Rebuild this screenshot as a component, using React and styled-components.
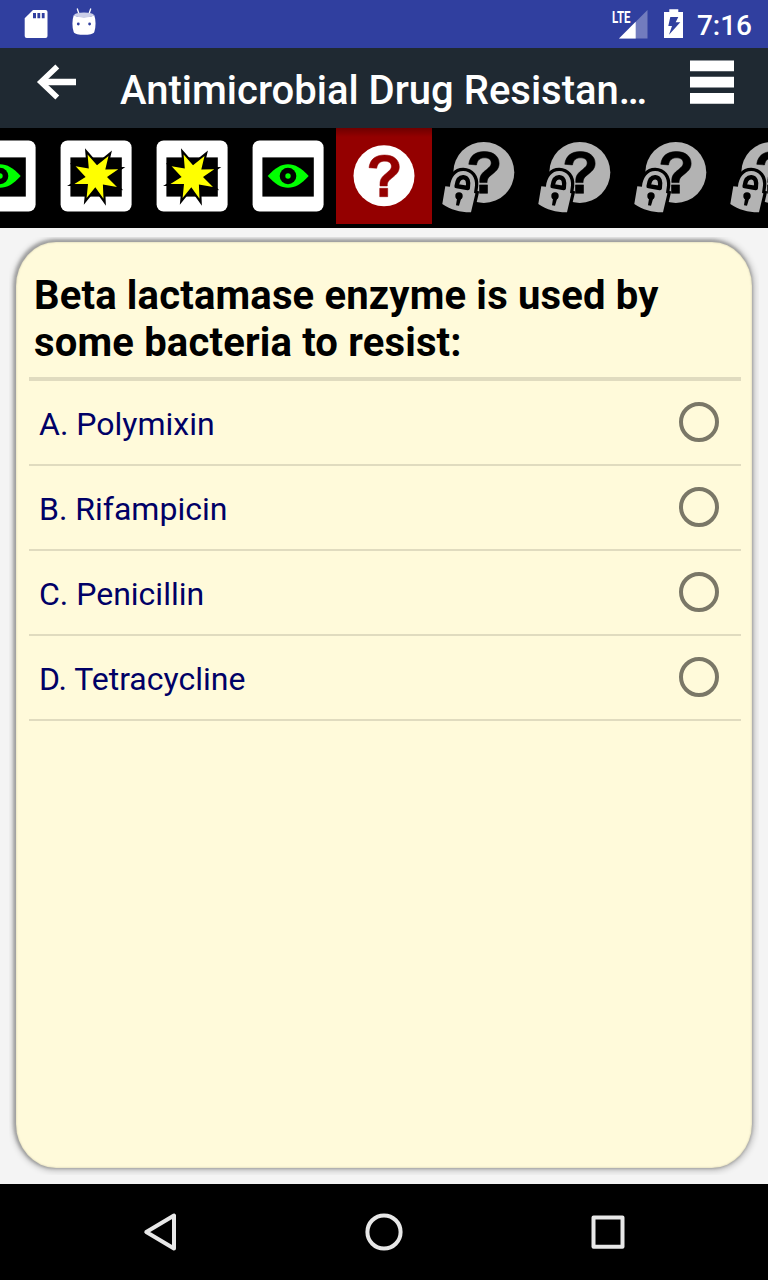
import React from "react";
import styled, { createGlobalStyle } from "styled-components";

const GlobalStyle = createGlobalStyle`
  *, *::before, *::after { box-sizing: border-box; }
  body { margin: 0; background: #f4f4f4; font-family: Roboto, sans-serif; }
`;

const Screen = styled.div`
  width: 768px;
  height: 1280px;
  display: flex;
  flex-direction: column;
  overflow: hidden;
`;

const StatusBar = styled.header`
  height: 48px;
  flex: none;
  display: flex;
  justify-content: space-between;
  background: #303f9f;
`;

const StatusGroup = styled.div`
  display: flex;
  padding-right: ${(p) => (p.$end ? "16px" : "0")};
`;

const Clock = styled.span`
  font-size: 28px;
  font-weight: 500;
  line-height: 52px;
  color: #fff;
`;

const AppBar = styled.div`
  height: 80px;
  flex: none;
  display: flex;
  background: #1f2932;
`;

const BarButton = styled.button`
  width: ${(p) => p.$width}px;
  height: 80px;
  flex: none;
  padding: 0;
  border: 0;
  background: none;
`;

const Title = styled.h1`
  margin: 0;
  flex: 1;
  min-width: 0;
  font-size: 40px;
  font-weight: 500;
  line-height: 47px;
  padding-top: 19px;
  white-space: nowrap;
  color: #fff;
`;

const Strip = styled.nav`
  height: 100px;
  flex: none;
  display: flex;
  overflow: hidden;
  background: #000;
`;

const StripCell = styled.div`
  width: 96px;
  height: 96px;
  flex: none;
  background: ${(p) =>
    p.$active ? "linear-gradient(#6e0000, #940000 9px)" : "transparent"};

  &:first-child { margin-left: -48px; }
  svg { display: block; }
`;

const Content = styled.main`
  flex: 1;
  display: flex;
  padding: 9px 9px 9px;
  background: #f4f4f4;
`;

const CardFrame = styled.div`
  flex: 1;
  display: flex;
  padding: 5px 7px 7px;
  overflow: hidden;
`;

const Card = styled.section`
  flex: 1;
  padding: 30px 11px 0 13px;
  background: #fffada;
  border-radius: 40px / 44px;
  box-shadow:
    inset 0 0 2px rgba(120, 118, 100, 0.45),
    -1px -1px 3px 2px rgba(0, 0, 0, 0.22),
    0 0 6px 3px rgba(0, 0, 0, 0.2);
`;

const Question = styled.h2`
  margin: 0;
  padding: 0 5px 11px;
  border-bottom: 4px solid #e0dbbf;
  font-size: 40px;
  font-weight: 700;
  line-height: 47px;
  letter-spacing: 0.17px;
  color: #000;
`;

const OptionList = styled.ul`
  margin: 0;
  padding: 0;
  list-style: none;
`;

const Option = styled.li`
  height: 85px;
  display: flex;
  align-items: center;
  justify-content: space-between;
  padding: 0 22px 1px 10px;
  border-bottom: 2px solid #e0dbbf;
  font-size: 32px;
  color: #000066;
`;

const OptionLabel = styled.span`
  line-height: 38px;
  padding-top: 4px;
`;

const Radio = styled.span`
  width: 40px;
  height: 40px;
  border: 4px solid #7a7767;
  border-radius: 50%;
`;

const NavBar = styled.footer`
  height: 96px;
  flex: none;
  display: flex;
  justify-content: center;
  gap: 128px;
  background: #000;
`;

const NavIcon = styled.svg`
  width: 96px;
  height: 96px;
  fill: none;
  stroke: #e8e8e8;
  stroke-width: 4;
  stroke-linejoin: round;
`;

const MARK =
  "M33 39.7C34 31 40 27 48.5 27C57.5 27 63.3 31.7 63.3 38.8C63.3 43.2 61 46 56.8 49.3C52.4 52.8 51.3 54 51.3 58H44C43.8 52 45 49.6 49.2 46.2C53.5 42.7 55.4 41 55.4 38.3C55.4 35.1 52.7 33.2 48.7 33.2C44 33.2 41.5 35.7 40.7 40.3ZM43.7 60.3H51.7V68.7H43.7Z";

const Tile = () => (
  <>
    <rect x="12.6" y="12.4" width="71" height="71.2" rx="7" fill="#fff" />
    <rect x="22.4" y="29.4" width="51.4" height="39.2" fill="#000" />
  </>
);

const EyeIcon = () => (
  <svg width="96" height="96" viewBox="0 0 96 96">
    <Tile />
    <path d="M27.7 48C35 40 41 36.2 48 36.2S61.5 40 68.7 48C61.5 56 55 59.8 48 59.8S35 56 27.7 48Z" fill="#0f0" />
    <circle cx="48" cy="48" r="8.3" />
    <circle cx="48" cy="48" r="2.7" fill="#0f0" />
  </svg>
);

const StarIcon = () => (
  <svg width="96" height="96" viewBox="0 0 96 96">
    <Tile />
    <path
      d="M39.6 26.5L49 37.3L60.5 28L57.3 41.6L70.3 41.3L59 49L69 59L54.9 56.4L55.5 70.8L47.3 59.3L38.6 70L40 56L26.4 56L37.6 49L27.6 38.3L40.8 40.6Z"
      fill="#ff0"
      stroke="#000"
      strokeWidth="4.2"
      strokeMiterlimit="8"
      paintOrder="stroke"
    />
  </svg>
);

const QuestionIcon = () => (
  <svg width="96" height="96" viewBox="0 0 96 96">
    <circle cx="48" cy="47.8" r="30.5" fill="#fff" />
    <path d={MARK} fill="#940000" stroke="#940000" strokeWidth="0.5" />
  </svg>
);

const LockedIcon = () => (
  <svg width="96" height="96" viewBox="0 0 96 96">
    <g transform="translate(3.8 -3.4)">
      <circle cx="48" cy="47.8" r="30.5" fill="#b3b3b3" />
      <path d={MARK} fill="#000" stroke="#000" strokeWidth="0.6" />
    </g>
    <path
      d="M13.3 58.2L17.9 58.7C19 49 24 42.8 31.3 42.9C39 43 43.8 49.5 43 57.5L42 64.8L43.4 65.4L39 84.3C29 84.5 19 82 10.3 76Z"
      fill="#b3b3b3"
      stroke="#000"
      strokeWidth="6.5"
      paintOrder="stroke"
    />
    <path
      d="M24.6 58.2C25.4 52 28 49 31.4 49.2C35.6 49.5 37 53.5 35.8 60Z"
      fill="#b3b3b3"
      stroke="#000"
      strokeWidth="4.4"
      strokeLinejoin="round"
    />
    <circle cx="27" cy="67.9" r="3.7" />
    <path d="M25.4 68L24 77.3L27 77.7L29.6 69Z" />
  </svg>
);

const icons = { eye: EyeIcon, star: StarIcon, question: QuestionIcon, locked: LockedIcon };
const steps = ["eye", "star", "star", "eye", "question", "locked", "locked", "locked", "locked"];
const options = ["A. Polymixin", "B. Rifampicin", "C. Penicillin", "D. Tetracycline"];

export default function App() {
  return (
    <Screen>
      <GlobalStyle />
      <StatusBar>
        <StatusGroup>
          <svg width="110" height="48" viewBox="0 0 110 48">
            <path d="M33 10H45.5Q47.5 10 47.5 12V36Q47.5 38 45.5 38H26.7Q24.7 38 24.7 36V18.3Z" fill="#fff" />
            <path d="M33 13h3v5.2h-3zM37.4 13h2.8v5.2h-2.8zM41.8 13h2.8v5.2h-2.8z" fill="#303f9f" />
            <path d="M77.2 8.5L79 14M90.8 8.5L89 14" stroke="#fff" strokeWidth="1.3" />
            <path d="M73.8 15C77 18 91 18 94.2 15C96 20 96 27 94.3 32C93 35.8 75 35.8 73.7 32C72 27 72 20 73.8 15Z" fill="#fff" />
            <ellipse cx="84" cy="15" rx="9.8" ry="2.6" fill="#cbcfe8" />
            <circle cx="78.3" cy="24" r="1.4" fill="#303f9f" />
            <circle cx="89.6" cy="24" r="1.4" fill="#303f9f" />
          </svg>
        </StatusGroup>
        <StatusGroup $end>
          <svg width="92" height="48" viewBox="605 0 92 48">
            <text x="612" y="22.6" fontSize="16.8" fontWeight="700" fill="#fff" textLength="18.5" lengthAdjust="spacingAndGlyphs">LTE</text>
            <path d="M619 38.5L647.5 10V38.5Z" fill="#fff" fillOpacity="0.32" />
            <path d="M619 38.5L635.7 21.8V38.5Z" fill="#fff" />
            <path d="M664 12H669.3V9.3H678.3V12H683V38H664Z" fill="#fff" />
            <path d="M670.3 17H678.3L675.7 22.2H680.3L669 34.7L672 26H668.3Z" fill="#303f9f" />
          </svg>
          <Clock>7:16</Clock>
        </StatusGroup>
      </StatusBar>

      <AppBar>
        <BarButton $width={120} aria-label="Back">
          <svg width="120" height="80" viewBox="0 48 120 80">
            <path d="M57.3 66.5L41 82L57.3 97.5" fill="none" stroke="#fff" strokeWidth="5.6" />
            <path d="M41 82H76" stroke="#fff" strokeWidth="6.4" />
          </svg>
        </BarButton>
        <Title>Antimicrobial Drug Resistan…</Title>
        <BarButton $width={96} aria-label="Menu">
          <svg width="96" height="80" viewBox="672 48 96 80">
            <path d="M690 60.5h44v10.8h-44zM690 76.8h44v10.8h-44zM690 93h44v10.8h-44z" fill="#fff" />
          </svg>
        </BarButton>
      </AppBar>

      <Strip>
        {steps.map((step, i) => {
          const Icon = icons[step];
          return (
            <StripCell key={i} $active={step === "question"}>
              <Icon />
            </StripCell>
          );
        })}
      </Strip>

      <Content>
        <CardFrame>
          <Card>
            <Question>Beta lactamase enzyme is used by some bacteria to resist:</Question>
            <OptionList>
              {options.map((label) => (
                <Option key={label}>
                  <OptionLabel>{label}</OptionLabel>
                  <Radio />
                </Option>
              ))}
            </OptionList>
          </Card>
        </CardFrame>
      </Content>

      <NavBar>
        <NavIcon viewBox="112 1184 96 96">
          <path d="M146.3 1232L174 1215.5V1248.5Z" />
        </NavIcon>
        <NavIcon viewBox="336 1184 96 96">
          <circle cx="384" cy="1232" r="16.6" />
        </NavIcon>
        <NavIcon viewBox="560 1184 96 96">
          <rect x="593.5" y="1217.5" width="29" height="29.3" />
        </NavIcon>
      </NavBar>
    </Screen>
  );
}
